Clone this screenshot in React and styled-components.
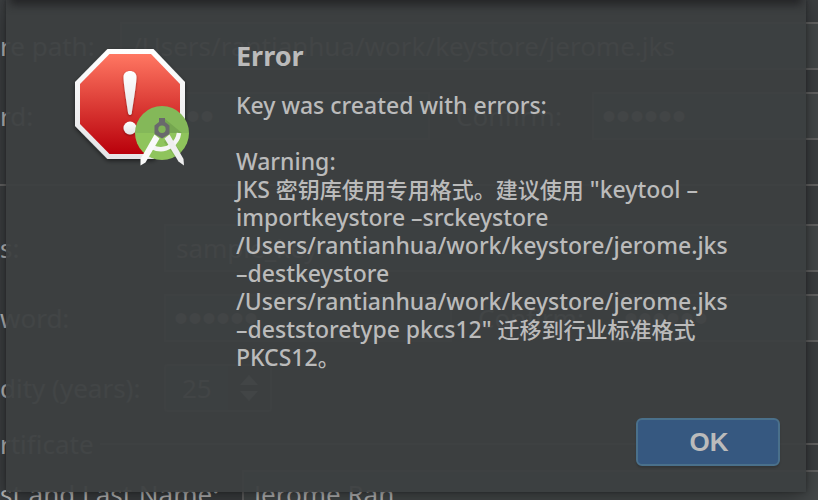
import React from "react";
import styled, { createGlobalStyle } from "styled-components";

const sans = `"Noto Sans", "Noto Sans CJK SC", sans-serif`;

const GlobalStyle = createGlobalStyle`
  *, *::before, *::after { box-sizing: border-box; }
  body { margin: 0; background: #3c3f41; color: #bbbbbb; font-family: ${sans}; }
`;

const Screen = styled.main`
  position: relative;
  height: 100vh;
  overflow: hidden;
`;

const Form = styled.form`
  display: flex;
  flex-direction: column;
  margin-right: -12px;
  padding-top: 22px;
  font-size: 26px;
`;

const Row = styled.div`
  display: flex;
  align-items: center;
  height: 48px;
  margin-bottom: 22px;
  white-space: nowrap;
`;

const Label = styled.label`
  flex: none;
  width: ${(p) => p.$width}px;
  padding-left: ${(p) => (p.$inset ? 26 : 0)}px;
`;

const Field = styled.input`
  flex: ${(p) => (p.$width ? "none" : "1")};
  width: ${(p) => p.$width || 100}px;
  min-width: 0;
  height: 48px;
  padding: 0 ${(p) => (p.type === "password" ? 8 : 10)}px;
  border: 2px solid #646464;
  border-radius: 0;
  background: #45494a;
  color: #bbbbbb;
  font-family: ${(p) => (p.type === "password" ? `"Liberation Sans", sans-serif` : sans)};
  font-size: ${(p) => (p.type === "password" ? 40 : 26)}px;
`;

const Spinner = styled.div`
  display: flex;
  width: 108px;
  height: 48px;
  border: 2px solid #646464;
  border-radius: 4px;
  background: #45494a;
`;

const SpinnerInput = styled.input`
  width: 62px;
  padding: 0 0 0 16px;
  border: 0;
  background: none;
  color: #bbbbbb;
  font: 26px ${sans};
`;

const SpinnerArrows = styled.div`
  display: flex;
  flex: 1;
  align-items: center;
  justify-content: center;
  background: #3c3f41;
`;

const Divider = styled.hr`
  width: 100%;
  height: 2px;
  margin: 22px 0 38px;
  border: 0;
  background: #646464;
`;

const SectionTitle = styled.div`
  display: flex;
  align-items: center;
  gap: 6px;
  height: 36px;
  margin: -8px 0 8px;
  &::after {
    content: "";
    flex: 1;
    height: 2px;
    background: #646464;
  }
`;

const Dialog = styled.section`
  position: absolute;
  inset: 0 12px 8px 6px;
  display: flex;
  flex-direction: column;
  justify-content: space-between;
  padding: 39px 26px 26px 64px;
  background: rgba(60, 63, 65, 0.96);
  box-shadow: 0 0 4px rgba(0, 0, 0, 0.3), 0 6px 24px rgba(0, 0, 0, 0.4);
`;

const TopShade = styled.div`
  position: absolute;
  inset: -10px 8px auto;
  height: 10px;
  box-shadow: 0 1px 8px 4px rgba(30, 30, 32, 0.8);
`;

const Content = styled.div`
  display: flex;
  gap: 34px;
`;

const AlertIcon = styled.svg`
  flex: none;
  width: 132px;
  height: 136px;
  margin-top: 1px;
`;

const Message = styled.div`
  flex: 1;
  min-width: 0;
  font-size: 23px;
  line-height: 28px;
  font-weight: 500;
  white-space: nowrap;
`;

const Title = styled.h1`
  margin: 0 0 18px;
  font-size: 27px;
  line-height: 34px;
  font-weight: 700;
`;

const Text = styled.p`
  margin: 0 0 28px;
  &:last-child { margin: 0; }
`;

const Chinese = styled.span`
  font-size: 22px;
  line-height: 1;
`;

const Actions = styled.div`
  display: flex;
  justify-content: flex-end;
`;

const Button = styled.button`
  width: 144px;
  height: 48px;
  padding: 0 0 0 2px;
  border: 2px solid #4a708b;
  border-radius: 6px;
  background: #365880;
  box-shadow: 0 2px 2px rgba(0, 0, 0, 0.15);
  color: #bbbbbb;
  font: 700 26px "Liberation Sans", Arial, sans-serif;
`;

function ErrorIcon() {
  return (
    <AlertIcon viewBox="70 40 132 136" role="img" aria-label="Error">
      <defs>
        <linearGradient id="red" x1="0" y1="0" x2="0" y2="1">
          <stop offset="0" stopColor="#ff7762" />
          <stop offset="0.5" stopColor="#dc3c36" />
          <stop offset="1" stopColor="#b9000b" />
        </linearGradient>
        <linearGradient id="white" x1="0" y1="0" x2="0" y2="1">
          <stop offset="0" stopColor="#ffffff" />
          <stop offset="1" stopColor="#e4e4e6" />
        </linearGradient>
        <filter id="shade" x="-20%" y="-20%" width="140%" height="140%">
          <feDropShadow dx="0" dy="2" stdDeviation="2" floodColor="#000" floodOpacity="0.5" />
        </filter>
        <filter id="markShade" x="-40%" y="-20%" width="180%" height="140%">
          <feDropShadow dx="0" dy="1" stdDeviation="1" floodColor="#500" floodOpacity="0.6" />
        </filter>
        <clipPath id="disc"><circle cx="162" cy="133" r="27" /></clipPath>
      </defs>
      <path d="M107.500 49H153.500L185 82V126L153.500 159H107.500L75 126V82Z" fill="url(#white)" filter="url(#shade)" />
      <path d="M109.500 54H151L180 84V124L151 154H109.500L80 124V84Z" fill="url(#red)" />
      <g fill="url(#white)" filter="url(#markShade)">
        <path d="M123.500 77C123.500 69 136.500 69 136.500 77C136.500 84 133 105 131.800 113.500Q130 116.500 128.200 113.500C127 105 123.500 84 123.500 77Z" />
        <circle cx="130" cy="128" r="6.500" />
      </g>
      <g clipPath="url(#disc)">
        <path d="M134 105H190V133H134Z" fill="#84b859" />
        <path d="M134 133H190V161H134Z" fill="#8fc45c" />
        <path d="M165 119L182 133H170L160 126Z" fill="#75a650" />
        <path d="M168 137L190 161H178L164 142Z" fill="#7fb251" />
      </g>
      <path d="M152 147Q162 152 171 146Q178 141 179 133" fill="none" stroke="#f5f5f5" strokeWidth="4.500" />
      <path d="M154.500 134.500L159.500 138.500L145.500 162.500L140.500 165.500L140.500 159Z" fill="#fafafa" />
      <path d="M169.500 134.500L164.500 138.500L178.500 161.500L184 165.500L183.500 159Z" fill="#eeeeee" />
      <path d="M159 118H165V122L169.500 125.500V134L162 138.500L154.500 134V125.500L159 122Z" fill="#69696c" />
      <circle cx="162" cy="129.300" r="3.700" fill="#80b357" />
    </AlertIcon>
  );
}

export default function App() {
  return (
    <>
      <GlobalStyle />
      <Screen>
        <Form>
          <Row>
            <Label $width={120} htmlFor="path">re path:</Label>
            <Field id="path" defaultValue="/Users/rantianhua/work/keystore/jerome.jks" />
          </Row>
          <Row>
            <Label $width={120} htmlFor="pass">rd:</Label>
            <Field id="pass" type="password" $width={310} defaultValue="jerome" />
            <Label $width={162} $inset htmlFor="confirm">Confirm:</Label>
            <Field id="confirm" type="password" defaultValue="jerome" />
          </Row>
          <Divider />
          <Row>
            <Label $width={164} htmlFor="alias">s:</Label>
            <Field id="alias" defaultValue="sample_key" />
          </Row>
          <Row>
            <Label $width={164} htmlFor="keypass">word:</Label>
            <Field id="keypass" type="password" $width={288} defaultValue="jerome" />
            <Label $width={162} $inset htmlFor="keyconfirm">Confirm:</Label>
            <Field id="keyconfirm" type="password" defaultValue="jerome" />
          </Row>
          <Row>
            <Label $width={164} htmlFor="years">dity (years):</Label>
            <Spinner>
              <SpinnerInput id="years" defaultValue="25" />
              <SpinnerArrows>
                <svg width="18" height="28" viewBox="0 0 18 28" fill="#bbbbbb">
                  <path d="M0 11L9 1L18 11ZM0 17H18L9 27Z" />
                </svg>
              </SpinnerArrows>
            </Spinner>
          </Row>
          <SectionTitle>rtificate</SectionTitle>
          <Row>
            <Label $width={242} htmlFor="name">st and Last Name:</Label>
            <Field id="name" defaultValue="Jerome Ran" />
          </Row>
        </Form>
        <Dialog role="alertdialog" aria-labelledby="dialog-title">
          <TopShade />
          <Content>
            <ErrorIcon />
            <Message>
              <Title id="dialog-title">Error</Title>
              <Text>Key was created with errors:</Text>
              <Text>
                Warning:<br />
                JKS <Chinese>密钥库使用专用格式。建议使用</Chinese> "keytool –<br />
                importkeystore –srckeystore<br />
                /Users/rantianhua/work/keystore/jerome.jks<br />
                –destkeystore<br />
                /Users/rantianhua/work/keystore/jerome.jks<br />
                –deststoretype pkcs12" <Chinese>迁移到行业标准格式</Chinese><br />
                PKCS12<Chinese>。</Chinese>
              </Text>
            </Message>
          </Content>
          <Actions>
            <Button type="button">OK</Button>
          </Actions>
        </Dialog>
      </Screen>
    </>
  );
}
